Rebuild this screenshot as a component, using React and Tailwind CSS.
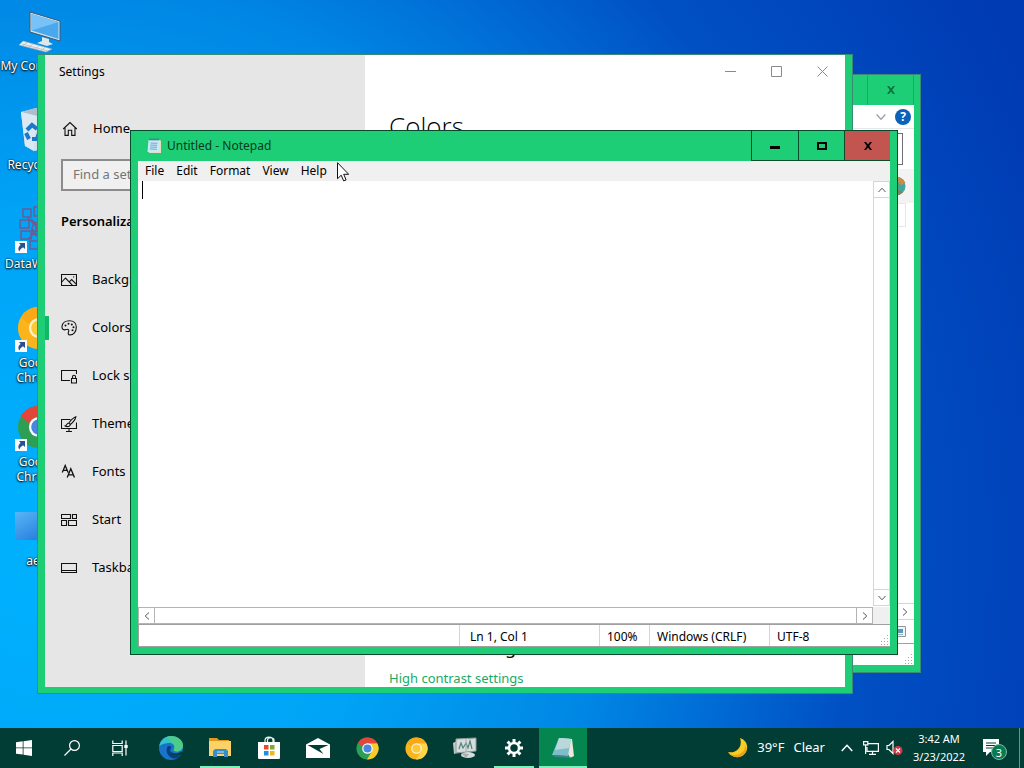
import React from 'react';

const navItems = [
  { label: 'Background', icon: 'picture' },
  { label: 'Colors', icon: 'palette', active: true },
  { label: 'Lock screen', icon: 'lock' },
  { label: 'Themes', icon: 'themes' },
  { label: 'Fonts', icon: 'fonts' },
  { label: 'Start', icon: 'start' },
  { label: 'Taskbar', icon: 'taskbar' },
];

const menus = ['File', 'Edit', 'Format', 'View', 'Help'];

function NavIcon({ name }) {
  return (
    <svg className="h-4 w-4 shrink-0" viewBox="0 0 16 16" fill="none" stroke="#111" strokeWidth="1.1">
      {name === 'home' && <path d="M1.2 8 8 1.5 14.8 8M3 6.5V14.4h3.3V9.3h3.4v5.1H13V6.5" />}
      {name === 'picture' && (
        <>
          <path d="M.5 2.500h15v11H.5zM.8 10 4.500 6l6.800 7.200M8.500 9.600l2.200-2 4.500 4.500" />
          <path d="M12 5h1.200" />
        </>
      )}
      {name === 'palette' && (
        <>
          <path d="M1 6.500C1.300 3 4.500.700 8.500.700c4 0 6.800 2.600 6.800 6.500 0 4.600-3 7.700-6.200 7.700-2 0-2.300-1.600-1.600-3 .7-1.300.2-2.800-1.400-2.700-1 0-1.600.8-2.700.7C1.800 9.800.8 8.500 1 6.500z" />
          <g fill="#111" stroke="none">
            <circle cx="4.500" cy="5.500" r="1" />
            <circle cx="7.500" cy="3.700" r="1" />
            <circle cx="10.800" cy="4.500" r="1" />
            <circle cx="12.500" cy="7.200" r="1" />
            <circle cx="11.500" cy="10.200" r="1" />
          </g>
        </>
      )}
      {name === 'lock' && (
        <>
          <path d="M9 12.500H.5v-10h15V6" />
          <path d="M10.500 10.500h5v4.500h-5zM11.500 10.500V8.700c0-2 3-2 3 0v1.800" />
        </>
      )}
      {name === 'themes' && (
        <>
          <path d="M9.500 3.500h-9v9h15v-6M5 15.500h6M8 12.500v3" />
          <path d="M14.800.800c-2.500 1-5.300 4-7 6.200l1.500 1.500c2.300-1.900 5-4.700 5.500-7.700zM7.800 7c-2.300 0-1.700 2.500-3.600 3 1.900 1.200 5 .7 5.100-1.500" />
        </>
      )}
      {name === 'fonts' && (
        <path strokeWidth="1.300" d="M1.300 8.500 4.200 1.500l2.900 7M2.300 6.300h3.700M6.200 13.500l3.600-8.700 3.700 8.700M7.500 10.800h4.700" />
      )}
      {name === 'start' && <path d="M.5 2.500h9v4h-9zM11.500 2.500h4v4h-4zM.5 8.500h5v5h-5zM7.500 8.500h8v5h-8z" />}
      {name === 'taskbar' && <path d="M.5 3.500h15v9H.5zM.5 10.500h15" />}
    </svg>
  );
}

function ShortcutArrow() {
  return (
    <svg className="absolute bottom-0 left-0 h-3 w-3" viewBox="0 0 12 12">
      <path fill="#f8fafc" d="M0 0h12v12H0z" />
      <path fill="#274f91" d="M4 2h6v6L8 6.300C6 7.500 5 8.500 4.500 10.500 2.500 8 3.500 5.500 5.700 4z" />
    </svg>
  );
}

function ChromeLogo({ className, canary = false }) {
  const [top, left, right, dot] = canary
    ? ['#f8a915', '#fbb51c', '#ffd54a', '#fcc934']
    : ['#e2453a', '#2c9f55', '#fbcb2c', '#4a86e0'];
  return (
    <svg className={className} viewBox="0 0 48 48">
      <circle cx="24" cy="24" r="23" fill={left} />
      <path fill={right} d="M24 13h20.300A23 23 0 0 1 23 47l10.500-18z" />
      <path fill={top} d="M4 12.500a23 23 0 0 1 40.300.5H24c-5 0-9 3-10.500 7z" />
      <circle cx="24" cy="24" r="11" fill="#fff" fillOpacity={canary ? 0.8 : 1} />
      <circle cx="24" cy="24" r="8.500" fill={dot} />
    </svg>
  );
}

function ComputerIcon() {
  return (
    <svg className="h-12 w-12" viewBox="0 0 48 48">
      <path d="M15 5 45 14v20L15 25z" fill="#d7e4ec" stroke="#41566a" />
      <path d="M16.500 7 43.500 15v17L16.500 23.500z" fill="#4aa8ef" />
      <path d="M16.500 7 43.500 15l-27 8.500z" fill="#79c2f8" />
      <path d="m27 30 7 2v3l4 2-6 2-10-3 5-2z" fill="#dfe7ea" />
      <path d="m8 34 29 8-6 3-27-7z" fill="#eceff0" stroke="#9aa8b0" strokeWidth=".6" />
      <path d="m7 37 26 7M12 35.500l-4 3M18 37l-4 3M24 39l-4 3M30 40.500l-4 3" stroke="#a9b4ba" strokeWidth=".7" />
    </svg>
  );
}

function RecycleIcon() {
  return (
    <svg className="h-12 w-12" viewBox="0 0 48 48">
      <path d="m6 6 15-4 21 4-5 36-18 3-9-5z" fill="#cfe0ea" />
      <path d="m6 6 16 4 20-4-21-4z" fill="#aebfcb" />
      <path d="m6 6 16 4-3 35-9-5z" fill="#d9e8f2" />
      <g fill="none" stroke="#1c78c8" strokeWidth="4">
        <path d="m12 24 5-5 5 4M24 27l-2 6h-5M14 33l-3-6" />
      </g>
    </svg>
  );
}

function DataIcon() {
  return (
    <svg className="h-12 w-12" viewBox="0 0 48 48" fill="none" stroke="#6d5b92" strokeWidth="1.500">
      <path d="M8 4h8v8H8zM19 2h8v9h-8zM5 15h9v8H5zM16 14l8 8 8-8M6 26h10v8H6zM17 24l9 9M26 22l-10 9M15 36h10v8H15zM12 12l12 12-12 11M30 9v32M24 4v38" />
      <circle cx="24" cy="24" r="7" />
      <circle cx="24" cy="24" r="3" fill="#a23c55" />
    </svg>
  );
}

function DesktopIcon({ label, shortcut, children }) {
  return (
    <a
      href="#"
      className="flex h-[99px] w-[78px] flex-col items-center text-center text-xs leading-[15px] text-white [text-shadow:0_1px_2px_#000,0_0_2px_#000]"
    >
      <span className="relative flex h-12 w-12 items-center justify-center">
        {children}
        {shortcut && <ShortcutArrow />}
      </span>
      <span className="mt-[3px] whitespace-pre">{label}</span>
    </a>
  );
}

function ClassicX({ className }) {
  return (
    <svg className={className} viewBox="0 0 10 10">
      <path d="M1 1h2l2 2.500L7 1h2L6.200 5 9 9H7L5 6.500 3 9H1l2.800-4z" fill="currentColor" />
    </svg>
  );
}

function Grip() {
  return (
    <svg className="absolute bottom-0 right-0 h-3 w-3" viewBox="0 0 12 12" fill="#aaa">
      <path d="M9 1h1v1H9zM9 4h1v1H9zM9 7h1v1H9zM9 10h1v1H9zM6 4h1v1H6zM6 7h1v1H6zM6 10h1v1H6zM3 7h1v1H3zM3 10h1v1H3z" />
    </svg>
  );
}

function Chevron({ direction, className = 'h-2 w-2' }) {
  const paths = {
    up: 'M.5 6 4 2.200 7.500 6',
    down: 'M.5 2 4 5.800 7.500 2',
    left: 'M6 .5 2.200 4 6 7.500',
    right: 'M2 .5 5.800 4 2 7.500',
  };
  return (
    <svg className={className} viewBox="0 0 8 8" fill="none" stroke="currentColor">
      <path d={paths[direction]} />
    </svg>
  );
}

function ExplorerWindow() {
  return (
    <section
      aria-label="Explorer"
      className="absolute bottom-[55px] left-[200px] right-[103px] top-[74px] flex flex-col border border-[#3b8a76] bg-[#1ece76] px-[6px] pb-[7px]"
    >
      <div className="flex h-[30px] shrink-0 justify-end">
        <button aria-label="Close" className="flex w-[47px] items-center justify-center border-x border-[#24a465] text-[#0b7340]">
          <ClassicX className="h-[10px] w-[10px]" />
        </button>
      </div>
      <div className="relative flex min-h-0 flex-1 flex-col bg-white">
        <div className="flex h-6 shrink-0 items-center justify-end gap-[9px] border-b border-gray-200 pr-[3px] text-gray-400">
          <Chevron direction="down" className="h-[10px] w-[10px]" />
          <button aria-label="Help" className="flex h-4 w-4 items-center justify-center rounded-full bg-[#0b62b8] text-xs font-bold text-white">
            ?
          </button>
        </div>
        <div className="mr-[11px] mt-1 h-8 shrink-0 border border-[#707070]" />
        <div className="mt-1 flex h-[34px] shrink-0 items-center justify-end bg-[#f3f3f3] pr-2">
          <svg className="h-5 w-5" viewBox="0 0 20 20">
            <circle cx="10" cy="10" r="9.500" fill="#3fa79b" />
            <path d="M10 1c5 0 8 3 9.500 6L15 9l-3-3z" fill="#c98b49" />
            <path d="m12 14 5 2-4 3z" fill="#b0703a" />
          </svg>
        </div>
        <div className="mr-2 h-6 shrink-0 border border-gray-200" />
        <div className="flex-1" />
        <div className="flex h-[17px] shrink-0 items-center justify-end border-y border-gray-300 pr-[5px] text-gray-600">
          <Chevron direction="right" />
        </div>
        <div className="flex h-[23px] shrink-0 items-center justify-end pr-2">
          <svg className="h-[11px] w-[14px]" viewBox="0 0 14 11">
            <path d="M.5.500h13v10H.5z" fill="#eef5f8" stroke="#8b98a2" />
            <path d="M3 3h8v4H3z" fill="#5d96bd" />
            <path d="M3 8h8v1H3z" fill="#9bb" />
          </svg>
        </div>
        <div className="relative h-[22px] shrink-0 border-t border-gray-400">
          <Grip />
        </div>
      </div>
    </section>
  );
}

function SettingsWindow() {
  return (
    <section
      aria-label="Settings"
      className="absolute bottom-[34px] left-[37px] right-[171px] top-[54px] flex border border-[#3b8a76] bg-[#1ece76] px-[7px] pb-[6px] text-black"
    >
      <aside className="flex w-80 shrink-0 flex-col bg-[#e6e6e6]">
        <h1 className="px-[14px] pt-2 text-xs leading-[18px]">Settings</h1>
        <a href="#" className="mt-[38px] flex h-5 items-center gap-[15px] px-[17px] text-[13px]">
          <NavIcon name="home" />
          Home
        </a>
        <input
          aria-label="Find a setting"
          placeholder="Find a setting"
          className="mx-4 mt-5 h-8 border-2 border-[#8c8c8c] bg-[#f0f0f0] px-[10px] pb-[2px] text-[13px] placeholder:text-[#757575]"
        />
        <h2 className="mt-5 px-4 text-[13px] font-semibold leading-5">Personalization</h2>
        <nav className="mt-[25px] flex flex-col">
          {navItems.map((item) => (
            <a key={item.label} href="#" className="relative flex h-12 items-center gap-[15px] px-4 text-[13px]">
              {item.active && <span className="absolute left-0 h-6 w-1 bg-[#10b868]" />}
              <NavIcon name={item.icon} />
              {item.label}
            </a>
          ))}
        </nav>
      </aside>
      <main className="flex min-w-0 flex-1 flex-col bg-white">
        <div className="flex h-8 shrink-0 justify-end text-[#8a8a8a]">
          <button aria-label="Minimize" className="flex w-[46px] items-center justify-center">
            <svg className="h-[11px] w-[11px]" viewBox="0 0 11 11" stroke="currentColor"><path d="M0 5.500h11" /></svg>
          </button>
          <button aria-label="Maximize" className="flex w-[46px] items-center justify-center">
            <svg className="h-[11px] w-[11px]" viewBox="0 0 11 11" stroke="currentColor" fill="none"><path d="M.5.500h10v10H.5z" /></svg>
          </button>
          <button aria-label="Close" className="flex w-[46px] items-center justify-center">
            <svg className="h-[11px] w-[11px]" viewBox="0 0 11 11" stroke="currentColor"><path d="m.5.500 10 10m0-10-10 10" /></svg>
          </button>
        </div>
        <div className="flex flex-1 flex-col px-6 pt-[21px]">
          <h2 className="font-['Open_Sans','Noto_Sans',sans-serif] text-[26px] font-light leading-9">Colors</h2>
          <div className="flex-1" />
          <h3 className="text-lg leading-7">Related settings</h3>
          <a href="#" className="mt-2 text-[13px] leading-[18px] text-[#17ab66]">High contrast settings</a>
        </div>
      </main>
    </section>
  );
}

function NotepadIcon({ className }) {
  return (
    <svg className={className} viewBox="0 0 16 16">
      <path d="m3 2 12 .5V15H3z" fill="#e9dcc0" />
      <path d="m2.500 2 11.500.3-.5 12L1.500 14z" fill="#c9e9f7" />
      <path d="m4.500 5 7 .3M4.300 7l7 .3M4 9l7 .3M3.800 11l7 .3" stroke="#6fa9cd" />
      <path d="M4 .5v2M6 .5v2M8 .5v2M10 .5v2M12 .5v2" stroke="#36637d" />
    </svg>
  );
}

function NotepadWindow() {
  const scrollButton = 'flex items-center justify-center text-gray-600';
  return (
    <section
      aria-label="Notepad"
      className="absolute bottom-[73px] left-[130px] right-[126px] top-[130px] flex flex-col border border-[#064a2b] bg-[#1ece76] px-[7px] pb-[7px] text-black"
    >
      <header className="flex h-[30px] shrink-0 items-center">
        <NotepadIcon className="ml-2 h-4 w-4" />
        <h1 className="ml-[5px] flex-1 text-xs text-[#06391f]">Untitled - Notepad</h1>
        <div className="flex h-full border-b border-l border-[#0b4a2b]">
          <button aria-label="Minimize" className="flex w-[47px] items-center justify-center border-r border-[#0b4a2b] pt-1">
            <span className="h-[3px] w-[10px] bg-black" />
          </button>
          <button aria-label="Maximize" className="flex w-[46px] items-center justify-center border-r border-[#0b4a2b]">
            <span className="h-2 w-[10px] border-2 border-black" />
          </button>
          <button aria-label="Close" className="flex w-[45px] items-center justify-center bg-[#c35550]">
            <ClassicX className="h-[10px] w-[10px]" />
          </button>
        </div>
      </header>
      <div className="flex h-5 shrink-0 items-center bg-[#f0f0f0] pl-px">
        {menus.map((menu) => (
          <button key={menu} className="h-full px-[6px] text-xs leading-5">
            {menu}
          </button>
        ))}
      </div>
      <div className="flex min-h-0 flex-1 bg-white">
        <div className="relative flex min-w-0 flex-1">
          <textarea aria-label="Document text" className="flex-1 resize-none p-1 text-sm outline-none" />
          <span className="absolute left-1 top-0 h-[18px] w-px bg-black" />
        </div>
        <div className="mb-px flex w-[17px] flex-col border border-gray-300">
          <button aria-label="Scroll up" className={`${scrollButton} h-4 border-b border-gray-300`}><Chevron direction="up" /></button>
          <div className="flex-1" />
          <button aria-label="Scroll down" className={`${scrollButton} h-4 border-t border-gray-300`}><Chevron direction="down" /></button>
        </div>
      </div>
      <div className="flex h-[17px] shrink-0 bg-[#f0f0f0]">
        <div className="flex flex-1 border border-[#b4b4b4] bg-white">
          <button aria-label="Scroll left" className={`${scrollButton} w-4 border-r border-[#b4b4b4]`}><Chevron direction="left" /></button>
          <div className="flex-1" />
          <button aria-label="Scroll right" className={`${scrollButton} w-4 border-l border-[#b4b4b4]`}><Chevron direction="right" /></button>
        </div>
        <div className="w-[17px]" />
      </div>
      <footer className="relative flex h-[23px] shrink-0 items-stretch border-y border-l border-[#a0a0a0] bg-white text-xs leading-[23px]">
        <div className="flex-1" />
        <div className="w-[140px] border-l border-gray-300 px-[10px]">Ln 1, Col 1</div>
        <div className="w-[50px] border-l border-gray-300 px-[7px]">100%</div>
        <div className="w-[120px] border-l border-gray-300 px-[7px]">Windows (CRLF)</div>
        <div className="w-[121px] border-l border-gray-300 px-[7px]">UTF-8</div>
        <Grip />
      </footer>
    </section>
  );
}

function TaskButton({ label, open, active, children }) {
  return (
    <button
      aria-label={label}
      className={`relative flex h-10 w-12 items-center justify-center ${active ? 'bg-[#058651]' : ''}`}
    >
      {children}
      {open && <span className={`absolute bottom-0 h-[2px] bg-[#7df0bb] ${active ? 'w-12' : 'w-10'}`} />}
    </button>
  );
}

function Taskbar() {
  return (
    <footer className="flex h-10 shrink-0 items-center justify-between bg-[#023d35] text-white">
      <div className="flex gap-[3px]">
        <div className="flex">
          <TaskButton label="Start">
            <svg className="h-4 w-4" viewBox="0 0 16 16" fill="#fff"><path d="M0 2.300 6.700 1.300v6.200H0zM7.500 1.200 16 0v7.500H7.500zM0 8.300h6.700v6.300L0 13.700zM7.500 8.300H16V16l-8.500-1.200z" /></svg>
          </TaskButton>
          <TaskButton label="Search">
            <svg className="h-4 w-4" viewBox="0 0 16 16" fill="none" stroke="#fff" strokeWidth="1.200"><circle cx="10.500" cy="5.500" r="4.900" /><path d="M7 9 .5 15.500" /></svg>
          </TaskButton>
          <TaskButton label="Task view">
            <svg className="h-4 w-4" viewBox="0 0 16 16" fill="none" stroke="#fff" strokeWidth="1.200"><path d="M.8.500v3h9.400v-3M.8 5.500h9.400v6H.8zM.8 16v-3h9.400v3M14 .5v15" /><path d="M12.300 5h3.400v3h-3.400z" fill="#fff" stroke="none" /></svg>
          </TaskButton>
        </div>
        <div className="flex gap-px">
          <TaskButton label="Microsoft Edge">
            <svg className="h-6 w-6" viewBox="0 0 24 24">
              <circle cx="12" cy="12" r="12" fill="#1874c9" />
              <path d="M.2 10C1.500 3.500 6.500 0 12 0c7 0 12 4.500 12 9.500 0 3.500-2.500 6-6.500 6-2.500 0-3.500-1-2.500-2.500C17 9 13 6.500 9 7 5 7.300 1.500 9 .2 10z" fill="#35c1c9" />
              <path d="M12 0c7 0 12 4.500 12 9.500 0 3.500-2.500 6-6.500 6-2.500 0-3.500-1-2.500-2.500 1.500-4-2-9-8-11.500C8.500.500 10 0 12 0z" fill="#55cf72" fillOpacity=".75" />
              <path d="M9 10c-3 4-1 10 4.500 12.200 3 1 6.500-.7 8.700-3.700-5 2.700-10.500.5-11-3.500-.2-2 1-3 1.300-4.500z" fill="#0b3d84" />
              <path d="M22.200 18.500c-5 2.700-10.500.5-11-3.500 1.500 2.500 6 4 11 .5l2 1z" fill="#023d35" />
            </svg>
          </TaskButton>
          <TaskButton label="File Explorer" open>
            <svg className="h-[20px] w-[22px]" viewBox="0 0 22 20">
              <path d="M0 0h8l2 2h10v3H0z" fill="#e39a1c" />
              <path d="M0 3h22v15H0z" fill="#fcd266" />
              <path d="M4 19v-6l2-2h11l2 2v6h-4v-3H8v3z" fill="#3a8cca" />
              <path d="M8 13h7v2H8z" fill="#77b9e6" />
            </svg>
          </TaskButton>
          <TaskButton label="Microsoft Store">
            <svg className="h-6 w-6" viewBox="0 0 24 24">
              <path d="M8 7V4.500C8 0 16 0 16 4.500V7M10.500 6V4c0-3 6.500-3 6.500 0v2" fill="none" stroke="#e9f5f0" strokeWidth="1.200" />
              <path d="M1 6h22v15.500c0 1-.7 1.500-1.500 1.500h-19c-.8 0-1.500-.5-1.500-1.500z" fill="#fff" />
              <path d="M7 9h4.500v4.500H7z" fill="#e94b26" /><path d="M13 9h4.500v4.500H13z" fill="#7aad2c" />
              <path d="M7 15h4.500v4.500H7z" fill="#1e91d8" /><path d="M13 15h4.500v4.500H13z" fill="#f4b51b" />
            </svg>
          </TaskButton>
          <TaskButton label="Mail">
            <svg className="h-5 w-6" viewBox="0 0 24 20"><path d="M0 6.500 12 0l12 6.500V20H0z" fill="#fff" /><path d="M1.500 7h21l-9 4 4 5z" fill="#023d35" /></svg>
          </TaskButton>
          <TaskButton label="Google Chrome"><ChromeLogo className="h-[23px] w-[23px]" /></TaskButton>
          <TaskButton label="Google Chrome Canary"><ChromeLogo canary className="h-[23px] w-[23px]" /></TaskButton>
          <TaskButton label="Performance Monitor">
            <svg className="h-[22px] w-6" viewBox="0 0 24 22">
              <path d="m0 6 4-2v12l-3 1z" fill="#c3cbca" /><path d="m3 2 20-1v13L3 16z" fill="#d6dddd" stroke="#919c9d" />
              <path d="m6 12 2-6 2 5 3-5 2 5 2-7 2 8" fill="none" stroke="#54847d" strokeWidth="1.200" />
              <path d="M13 2v13" stroke="#a3adad" /><ellipse cx="15" cy="18" rx="7" ry="3" fill="#d8dcdc" /><path d="m8 16 8 1-3 4z" fill="#a9b1b2" />
            </svg>
          </TaskButton>
          <TaskButton label="Settings" open>
            <svg className="h-[18px] w-[18px]" viewBox="0 0 18 18" fill="none" stroke="#fff">
              <circle cx="9" cy="9" r="5" strokeWidth="2.500" />
              <path strokeWidth="3" d="M9 0v3M9 15v3M0 9h3M15 9h3M2.600 2.600l2.200 2.200M13.200 13.200l2.200 2.200M2.600 15.400l2.200-2.200M13.200 4.800l2.200-2.200" />
            </svg>
          </TaskButton>
          <TaskButton label="Notepad" open active>
            <svg className="h-[22px] w-6" viewBox="0 0 24 22">
              <path d="m9 1 12 1 2 17-4 2z" fill="#eee7db" /><path d="m8 1 12 1-3 17L1 18z" fill="#7fbdc9" />
              <path d="m8 1 12 1-2 9-14 2z" fill="#b9d8dc" /><path d="m1 18 16 1 4 2-17-1z" fill="#3b8390" />
            </svg>
          </TaskButton>
        </div>
      </div>
      <div className="flex h-full items-center">
        <button className="flex items-center gap-2 text-[13px]">
          <svg className="mr-px h-5 w-5" viewBox="0 0 20 20"><path d="M12 0c9 3 9 13 3 17-5 4-12 2-15-3 9 2 15-6 12-14z" fill="#f9cb24" /><path d="M17 7c1 7-7 12-15 9 5 5 13 4 16-2 1-3 0-5-1-7z" fill="#e6a51a" /></svg>
          <span>39°F</span>
          <span className="ml-px">Clear</span>
        </button>
        <button aria-label="Show hidden icons" className="ml-4 flex w-3 justify-center"><Chevron direction="up" className="h-3 w-3" /></button>
        <svg aria-label="Network" className="ml-[10px] h-[14px] w-4" viewBox="0 0 16 14" fill="none" stroke="#fff" strokeWidth="1.200">
          <path d="M5 2.600h10.400v7.800H4V6M9.500 10.500V13M6 13.400h7M.6.600h4.200v3.300H.6zM2.600 4v9" />
        </svg>
        <svg aria-label="Muted" className="ml-[7px] h-4 w-[17px]" viewBox="0 0 17 16">
          <path d="M1 5.500h2l4-4v12l-4-4H1z" fill="none" stroke="#fff" strokeWidth="1.200" />
          <circle cx="12" cy="10.500" r="4.500" fill="#d13843" /><path d="m10 8.500 4 4m0-4-4 4" stroke="#fff" strokeWidth="1.200" />
        </svg>
        <div className="ml-2 w-14 whitespace-nowrap text-center text-[11px] leading-[18px]">
          <div>3:42 AM</div>
          <div>3/23/2022</div>
        </div>
        <button aria-label="Notifications" className="relative ml-4 h-6 w-6">
          <svg className="h-[18px] w-4" viewBox="0 0 16 18"><path d="M0 0h16v13H7l-4 4v-4H0z" fill="#fff" /><path d="M3 4h10M3 6.500h10M3 9h7" stroke="#023d35" /></svg>
          <span className="absolute left-2 top-2 flex h-4 w-4 items-center justify-center rounded-full border border-[#7dbb9f] bg-[#087a50] text-[11px] leading-none">3</span>
        </button>
        <div className="ml-3 mr-1 h-full w-px bg-[#6b918b]" />
      </div>
    </footer>
  );
}

export default function App() {
  return (
    <div className="flex h-screen flex-col overflow-hidden font-['Noto_Sans',sans-serif]">
      <div className="relative min-h-0 flex-1 bg-[radial-gradient(105%_150%_at_5%_75%,#00b2ff_0%,#00a4f6_30%,#0086e4_52%,#0050c4_75%,#003bb3_100%)]">
        <div className="flex flex-col pt-[7px]">
          <DesktopIcon label="My Computer"><ComputerIcon /></DesktopIcon>
          <DesktopIcon label="Recycle Bin"><RecycleIcon /></DesktopIcon>
          <DesktopIcon label="DataWorker" shortcut><DataIcon /></DesktopIcon>
          <DesktopIcon label={'Google\nChrome'} shortcut><ChromeLogo canary className="h-11 w-11" /></DesktopIcon>
          <DesktopIcon label={'Google\nChrome'} shortcut><ChromeLogo className="h-11 w-11" /></DesktopIcon>
          <DesktopIcon label="aero"><span className="h-7 w-12 bg-gradient-to-br from-[#58b6f8] to-[#176bd2]" /></DesktopIcon>
        </div>
        <ExplorerWindow />
        <SettingsWindow />
        <NotepadWindow />
        <svg className="absolute left-[337px] top-[162px] h-5 w-3" viewBox="0 0 12 20">
          <path d="M.5.700v16l3.700-3.500 2.500 5.700 2.400-1-2.400-5.600h5z" fill="#fff" stroke="#111" />
        </svg>
      </div>
      <Taskbar />
    </div>
  );
}
